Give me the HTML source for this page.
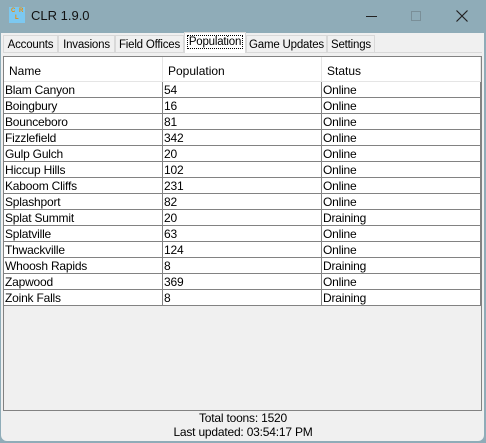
<!DOCTYPE html>
<html><head><style>
*{margin:0;padding:0;box-sizing:border-box}
body{width:486px;height:443px;overflow:hidden;background:#8facb8;font-family:"Liberation Sans",sans-serif;font-size:12px;color:#000;position:relative}
.title{position:absolute;left:0;top:0;width:486px;height:33px;background:#8facb8}
.icon{position:absolute;left:9px;top:7px;width:16px;height:16px;background:#7cc8f0;font-size:6px;color:#f08a00;font-weight:bold}
.tt{position:absolute;left:31px;top:8px;font-size:13px;color:#111}
.client{position:absolute;left:1px;top:33px;width:483px;height:408px;background:#f0f0f0;border-radius:0 0 6px 6px}
.tab{position:absolute;top:35px;height:18px;border:1px solid #d9d9d9;border-bottom:none;background:#f0f0f0;padding:3px 0 0 0;font-size:11.5px;color:#000;white-space:nowrap;overflow:hidden;text-align:center;letter-spacing:-0.2px}
.tab.sel{top:32px;height:21px;background:#fff;border-color:#d9d9d9}
.tab.sel span{border:1px dotted #000;padding:0 1px}
.panel{position:absolute;left:3px;top:52px;width:479px;height:1px;background:#d9d9d9}
.frame{position:absolute;left:3px;top:56px;width:479px;height:355px;border:1px solid #828282;background:#f0f0f0}
.hdr{position:absolute;left:0;top:0;width:477px;height:25px;background:#fff;border-bottom:1px solid #e5e5e5}
.hdr div{position:absolute;top:7px}
.row{position:absolute;left:0;width:477px;height:16px;background:#fff;border-bottom:1px solid #828282}
.row div{position:absolute;top:1px;left:1px;letter-spacing:-0.2px}
.vl{position:absolute;top:0;width:1px;background:#828282}
.hv{position:absolute;top:0;height:25px;width:1px;background:#e5e5e5}
.foot{position:absolute;left:0;width:486px;text-align:center;font-size:12px;letter-spacing:-0.2px}
</style></head><body>
<div class="title"><div class="icon"><span style="position:absolute;left:2px;top:1px">C</span><span style="position:absolute;left:10px;top:1px">R</span><span style="position:absolute;left:6px;top:8px">L</span></div><div class="tt">CLR 1.9.0</div>
<div style="position:absolute;left:366px;top:16px;width:11px;height:1px;background:#222"></div>
<div style="position:absolute;left:411px;top:11px;width:10px;height:10px;border:1px solid #7a8f98"></div>
<svg style="position:absolute;left:456px;top:10px" width="12" height="12"><path d="M0.5 0.5L11.5 11.5M11.5 0.5L0.5 11.5" stroke="#222" stroke-width="1.2"/></svg>
</div>
<div class="client"></div>
<div class="tab" style="left:3px;width:55px">Accounts</div>
<div class="tab" style="left:58px;width:57px">Invasions</div>
<div class="tab" style="left:115px;width:69px">Field Offices</div>
<div class="tab" style="left:246px;width:81px">Game Updates</div>
<div class="tab" style="left:327px;width:48px">Settings</div>
<div class="panel"></div>
<div class="tab sel" style="left:184px;width:62px"><span>Population</span></div>
<div class="frame">
<div class="hdr"><div style="left:5px">Name</div><div style="left:164px">Population</div><div style="left:323px">Status</div></div>
<div class="hv" style="left:158px"></div><div class="hv" style="left:317px"></div><div class="hv" style="left:476px"></div>
<div class="row" style="top:25px"><div>Blam Canyon</div><div style="left:160px">54</div><div style="left:319px">Online</div></div>
<div class="row" style="top:41px"><div>Boingbury</div><div style="left:160px">16</div><div style="left:319px">Online</div></div>
<div class="row" style="top:57px"><div>Bounceboro</div><div style="left:160px">81</div><div style="left:319px">Online</div></div>
<div class="row" style="top:73px"><div>Fizzlefield</div><div style="left:160px">342</div><div style="left:319px">Online</div></div>
<div class="row" style="top:89px"><div>Gulp Gulch</div><div style="left:160px">20</div><div style="left:319px">Online</div></div>
<div class="row" style="top:105px"><div>Hiccup Hills</div><div style="left:160px">102</div><div style="left:319px">Online</div></div>
<div class="row" style="top:121px"><div>Kaboom Cliffs</div><div style="left:160px">231</div><div style="left:319px">Online</div></div>
<div class="row" style="top:137px"><div>Splashport</div><div style="left:160px">82</div><div style="left:319px">Online</div></div>
<div class="row" style="top:153px"><div>Splat Summit</div><div style="left:160px">20</div><div style="left:319px">Draining</div></div>
<div class="row" style="top:169px"><div>Splatville</div><div style="left:160px">63</div><div style="left:319px">Online</div></div>
<div class="row" style="top:185px"><div>Thwackville</div><div style="left:160px">124</div><div style="left:319px">Online</div></div>
<div class="row" style="top:201px"><div>Whoosh Rapids</div><div style="left:160px">8</div><div style="left:319px">Draining</div></div>
<div class="row" style="top:217px"><div>Zapwood</div><div style="left:160px">369</div><div style="left:319px">Online</div></div>
<div class="row" style="top:233px"><div>Zoink Falls</div><div style="left:160px">8</div><div style="left:319px">Draining</div></div>
<div class="vl" style="left:158px;top:25px;height:224px"></div>
<div class="vl" style="left:317px;top:25px;height:224px"></div>
<div class="vl" style="left:476px;top:25px;height:224px"></div>
</div>
<div class="foot" style="top:411px">Total toons: 1520</div>
<div class="foot" style="top:425px">Last updated: 03:54:17 PM</div>
</body></html>
